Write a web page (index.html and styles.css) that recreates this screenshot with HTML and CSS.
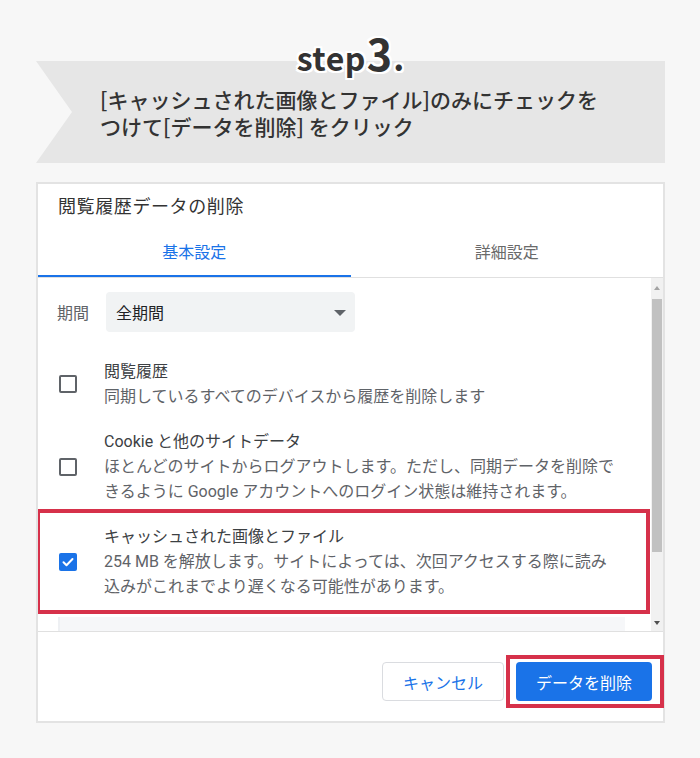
FILE: index.html
```html
<!DOCTYPE html>
<html lang="ja">
<head>
<meta charset="utf-8">
<title>step3</title>
<link rel="stylesheet" href="styles.css">
</head>
<body>
<div class="page">
  <header class="hero">
    <h1 class="step"><span class="step-word">step</span><span class="step-num">3</span><span class="step-dot">.</span></h1>
    <p class="hero-text">[キャッシュされた画像とファイル]のみにチェックを<br>つけて[データを削除] をクリック</p>
  </header>

  <section class="dialog">
    <h2 class="dialog-title">閲覧履歴データの削除</h2>
    <div class="tabs">
      <div class="tab active">基本設定</div>
      <div class="tab">詳細設定</div>
    </div>
    <div class="body">
      <div class="scroll">
        <div class="period">
          <span class="period-label">期間</span>
          <div class="select"><span>全期間</span><span class="caret"></span></div>
        </div>

        <div class="row">
          <span class="cb"></span>
          <div class="row-text">
            <div class="row-title">閲覧履歴</div>
            <div class="row-sub">同期しているすべてのデバイスから履歴を削除します</div>
          </div>
        </div>

        <div class="row">
          <span class="cb"></span>
          <div class="row-text">
            <div class="row-title">Cookie と他のサイトデータ</div>
            <div class="row-sub">ほとんどのサイトからログアウトします。ただし、同期データを削除で<br>きるように Google アカウントへのログイン状態は維持されます。</div>
          </div>
        </div>

        <div class="row highlight">
          <span class="cb checked"><svg viewBox="0 0 18 18" width="18" height="18"><path d="M4.5 9.3l3 2.9 6-6.2" fill="none" stroke="#fff" stroke-width="2" stroke-linecap="round" stroke-linejoin="round"/></svg></span>
          <div class="row-text">
            <div class="row-title">キャッシュされた画像とファイル</div>
            <div class="row-sub">254 MB を解放します。サイトによっては、次回アクセスする際に読み<br>込みがこれまでより遅くなる可能性があります。</div>
          </div>
        </div>

        <div class="next"></div>
      </div>
      <div class="scrollbar">
        <span class="arrow up"></span>
        <span class="thumb"></span>
        <span class="spacer"></span>
        <span class="arrow down"></span>
      </div>
    </div>
    <div class="footer">
      <button class="btn cancel">キャンセル</button>
      <button class="btn primary">データを削除</button>
    </div>
  </section>
</div>
</body>
</html>
```

FILE: styles.css
```css
* { box-sizing: border-box; }

body {
  margin: 0;
  background: #f7f7f7;
  font-family: Roboto, "Noto Sans CJK JP", sans-serif;
  color: #202124;
}

.page {
  width: 700px;
  padding: 30px 35px 0 36px;
}

/* ---------- hero banner ---------- */
.hero {
  position: relative;
  padding-bottom: 23px;
}

.hero::before {
  content: "";
  position: absolute;
  left: 0;
  right: 0;
  top: 31px;
  bottom: 0;
  background: #e6e6e6;
  clip-path: polygon(0 0, 100% 0, 100% 100%, 0 100%, 36px 50%);
}

.step {
  position: relative;
  margin: 0;
  height: 44px;
  line-height: 44px;
  text-align: center;
  font-family: "Noto Sans CJK JP", "Noto Sans", sans-serif;
  font-weight: 700;
  font-size: 40px;
  color: #333;
  text-shadow:
    2px 0 #fff, -2px 0 #fff, 0 2px #fff, 0 -2px #fff,
    2px 2px #fff, -2px -2px #fff, 2px -2px #fff, -2px 2px #fff;
}

.step-word {
  font-size: 32px;
  letter-spacing: 0.5px;
}

.step-num {
  font-size: 43px;
  margin-left: 1px;
}

.step-dot {
  font-size: 34px;
  margin-left: 1px;
}

.hero-text {
  position: relative;
  margin: 12px 0 0;
  padding-left: 64px;
  font-family: "Noto Sans CJK JP", sans-serif;
  font-weight: 500;
  font-size: 21px;
  line-height: 27px;
  color: #333;
  white-space: nowrap;
}

/* ---------- dialog ---------- */
.dialog {
  margin-top: 19px;
  background: #fff;
  border: 2px solid #e3e3e3;
}

.dialog-title {
  margin: 0;
  padding: 10px 0 0 20px;
  font-size: 18px;
  line-height: 26px;
  font-weight: 400;
  color: #333;
  letter-spacing: 0.6px;
}

.tabs {
  display: flex;
  border-bottom: 1px solid #e0e0e0;
}

.tab {
  flex: 1;
  text-align: center;
  padding: 21px 0 10px;
  font-size: 16px;
  line-height: 24px;
  color: #6a6a6a;
  border-bottom: 2px solid transparent;
}

.tab.active {
  color: #1a73e8;
  border-bottom-color: #1a73e8;
}

.body {
  display: flex;
  height: 353px;
}

.scroll {
  flex: 1;
  overflow: hidden;
  padding-top: 14px;
}

.period {
  display: flex;
  align-items: center;
  padding-left: 19px;
}

.period-label {
  width: 49px;
  font-size: 16px;
  color: #5f6368;
}

.select {
  width: 249px;
  height: 40px;
  background: #f1f3f4;
  border-radius: 4px;
  display: flex;
  align-items: center;
  justify-content: space-between;
  padding: 0 9px 0 10px;
  font-size: 16px;
  color: #202124;
}

.caret {
  width: 0;
  height: 0;
  border-left: 6px solid transparent;
  border-right: 6px solid transparent;
  border-top: 6px solid #5f6368;
  margin-top: 2px;
}

.row {
  position: relative;
  display: flex;
  align-items: center;
  padding: 10px 0 10px 21px;
}

.period + .row {
  margin-top: 17px;
}

.cb {
  flex: none;
  width: 18px;
  height: 18px;
  border: 2px solid #5f6368;
  border-radius: 2px;
  margin-right: 27px;
}

.cb.checked {
  border: none;
  background: #1a73e8;
  display: flex;
}

.row-text {
  font-size: 16px;
  line-height: 25px;
  white-space: nowrap;
}

.row-title {
  color: #3c4043;
}

.row-sub {
  color: #5f6368;
}

.row.highlight::after {
  content: "";
  position: absolute;
  top: -5px;
  bottom: -5px;
  left: -2px;
  right: 1px;
  border: 4px solid #d6314a;
}

.next {
  margin: 8px 26px 0 20px;
  height: 40px;
  background: #f6f7f9;
  border-left: 2px solid #eef0f3;
}

/* fake scrollbar */
.scrollbar {
  flex: none;
  width: 12px;
  background: #f1f1f1;
  display: flex;
  flex-direction: column;
  align-items: center;
}

.arrow {
  width: 0;
  height: 0;
  border-left: 3px solid transparent;
  border-right: 3px solid transparent;
}

.arrow.up {
  margin-top: 8px;
  border-bottom: 4px solid #a3a3a3;
}

.arrow.down {
  margin-bottom: 6px;
  border-top: 4px solid #505050;
}

.thumb {
  margin-top: 9px;
  width: 10px;
  height: 253px;
  background: #c1c1c1;
}

.spacer {
  flex: 1;
}

/* footer */
.footer {
  display: flex;
  justify-content: flex-end;
  gap: 12px;
  padding: 30px 11px 20px;
  border-top: 1px solid #e0e0e0;
}

.btn {
  height: 39px;
  border-radius: 4px;
  font-family: Roboto, "Noto Sans CJK JP", sans-serif;
  font-size: 16px;
  padding: 0;
  cursor: pointer;
}

.btn.cancel {
  width: 122px;
  background: #fff;
  color: #1a73e8;
  border: 1px solid #dadce0;
}

.btn.primary {
  position: relative;
  width: 136px;
  background: #1a73e8;
  color: #fff;
  border: none;
}

.btn.primary::after {
  content: "";
  position: absolute;
  top: -7px;
  bottom: -7px;
  left: -10px;
  right: -12px;
  border: 4px solid #d6314a;
}
```
